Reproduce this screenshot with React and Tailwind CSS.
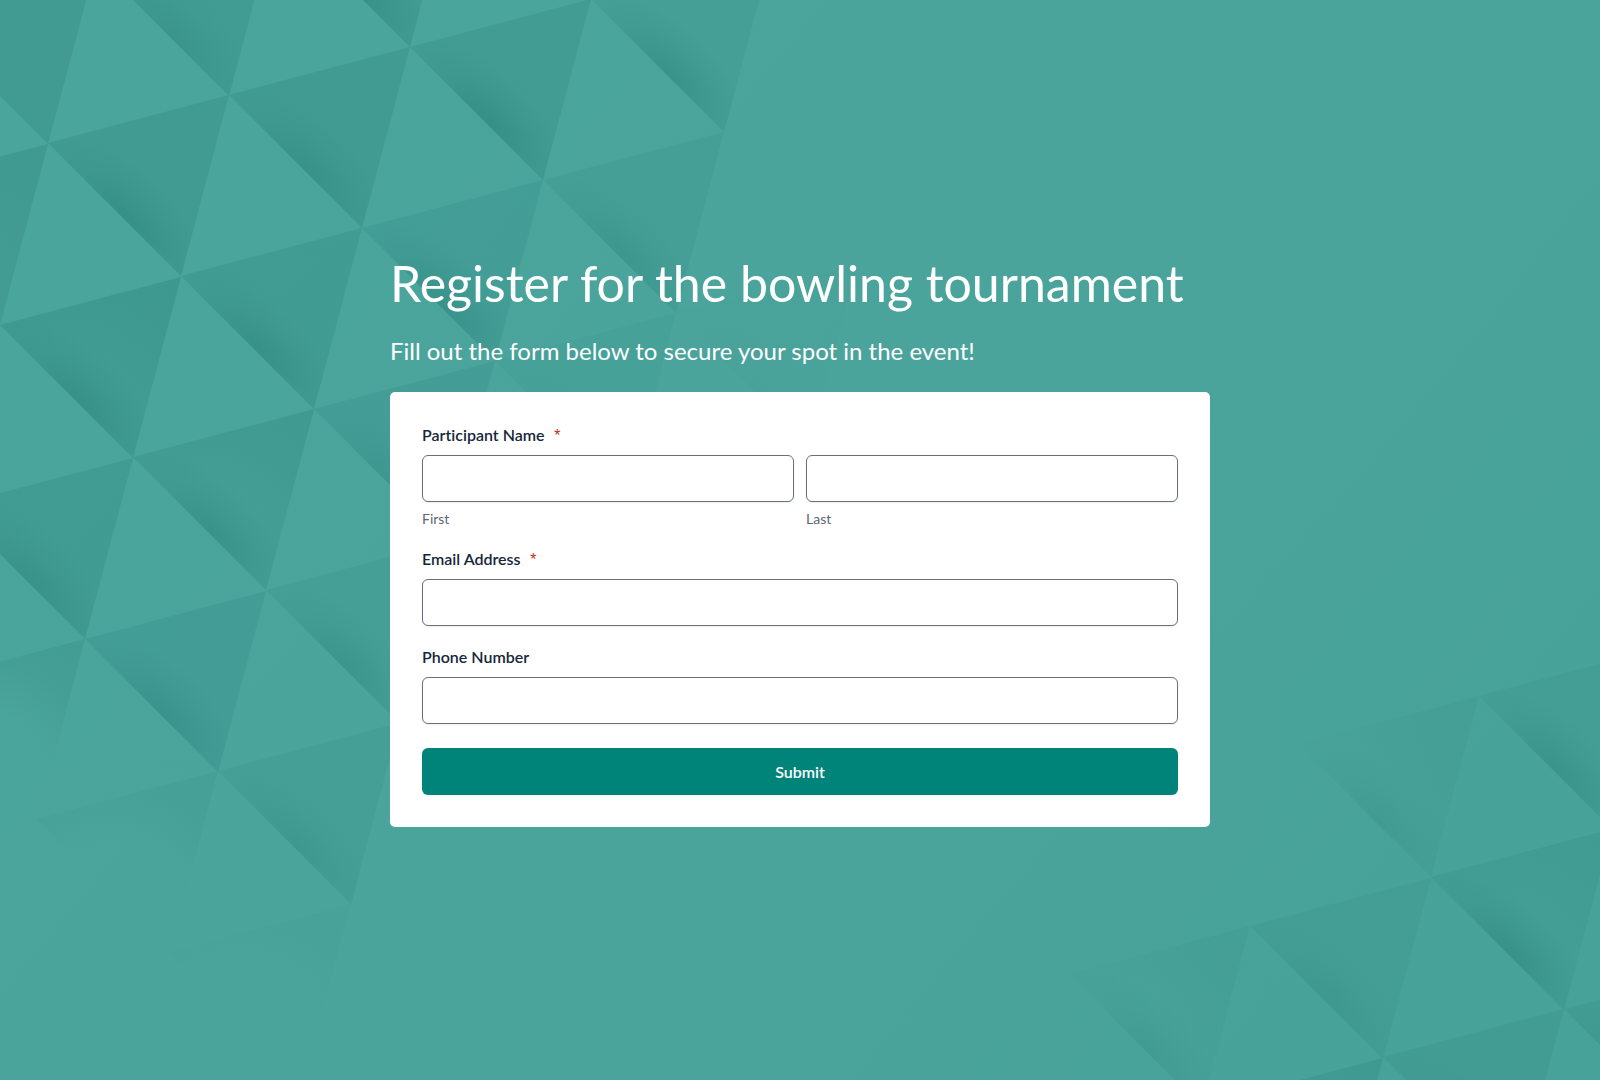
// Every facet is the same triangle, moved around. `base` is the flat shade,
// `fold` the shadow along the long edge, `corner` the shadow at the right tip.
// A `fade` facet loses its flat shade towards the left tip.
const facets = [
  { x: -85, y: 11, base: 0.95, fold: 0, corner: 0 },
  { x: 96, y: -37, base: 0.85, fold: 0.55, corner: 0 },
  { x: 277, y: -86, base: 0.8, fold: 0.9, corner: 0.1 },
  { x: -133, y: 192, base: 0.8, fold: 0, corner: 0.4 },
  { x: 48, y: 143, base: 0.95, fold: 0.9, corner: 0 },
  { x: 229, y: 95, base: 0.9, fold: 0.75, corner: 0 },
  { x: 410, y: 47, base: 0.75, fold: 1, corner: 0 },
  { x: 591, y: -1, base: 0.5, fold: 0.85, corner: 0 },
  { x: 0, y: 325, base: 0.85, fold: 0.85, corner: 0.6 },
  { x: 181, y: 276, base: 0.85, fold: 0.85, corner: 0 },
  { x: 362, y: 228, base: 0.6, fold: 0.85, corner: 0 },
  { x: 543, y: 180, base: 0.45, fold: 0.6, corner: 0 },
  { x: -48, y: 506, base: 0.85, fold: 0.75, corner: 0 },
  { x: 133, y: 457, base: 0.65, fold: 0.8, corner: 0.6 },
  { x: 314, y: 409, base: 0.6, fold: 0.5, corner: 0 },
  { x: 495, y: 361, base: 0.3, fold: 0.1, corner: 0 },
  { x: 676, y: 313, base: 0.1, fold: 0.05, corner: 0 },
  { x: -96, y: 687, base: 0, fold: 0, corner: 1 },
  { x: 85, y: 639, base: 0.6, fold: 0.75, corner: 0.1 },
  { x: 266, y: 590, base: 0.5, fold: 0.65, corner: 0 },
  { x: 37, y: 819, base: 0, fold: 0, corner: 0.6 },
  { x: 218, y: 771, base: 0.45, fold: 0.5, corner: 0 },
  { x: 170, y: 952, base: 0, fold: 0, corner: 0.3 },
  { x: 1479, y: 696, base: 0.5, fold: 0.75, corner: 0 },
  { x: 1298, y: 744, base: 0.35, fold: 0.4, corner: 0.15, fade: true },
  { x: 1431, y: 877, base: 0.55, fold: 0.9, corner: 0.4 },
  { x: 1250, y: 926, base: 0.5, fold: 0.45, corner: 0 },
  { x: 1069, y: 974, base: 0.25, fold: 0.4, corner: 0.3, fade: true },
  { x: 1564, y: 1009, base: 0.75, fold: 0.6, corner: 0 },
  { x: 1383, y: 1057, base: 0.7, fold: 0.5, corner: 0 },
  { x: 1202, y: 1106, base: 0.3, fold: 0, corner: 0.9 },
];

const TRIANGLE = "M0 0 181 -48 133 133Z";

function Backdrop() {
  return (
    <svg
      className="absolute inset-0 h-full w-full"
      viewBox="0 0 1600 1080"
      preserveAspectRatio="xMidYMid slice"
      aria-hidden="true"
    >
      <defs>
        <linearGradient id="wash" gradientUnits="userSpaceOnUse" x1="200" y1="0" x2="1500" y2="1080">
          <stop offset="0" stopColor="#4aa59d" />
          <stop offset="0.5" stopColor="#4aa49c" />
          <stop offset="1" stopColor="#47a29a" />
        </linearGradient>
        <linearGradient id="fade" gradientUnits="userSpaceOnUse" x1="20" y1="0" x2="140" y2="0">
          <stop offset="0" stopColor="#409a92" stopOpacity="0" />
          <stop offset="1" stopColor="#409a92" />
        </linearGradient>
        <radialGradient
          id="fold"
          gradientUnits="userSpaceOnUse"
          cx="0"
          cy="0"
          r="1"
          gradientTransform="translate(77 77) rotate(45) scale(106 50)"
        >
          <stop offset="0" stopColor="#2c857d" stopOpacity="0.56" />
          <stop offset="0.25" stopColor="#2c857d" stopOpacity="0.42" />
          <stop offset="0.6" stopColor="#2c857d" stopOpacity="0.17" />
          <stop offset="1" stopColor="#2c857d" stopOpacity="0" />
        </radialGradient>
        <radialGradient id="corner" gradientUnits="userSpaceOnUse" cx="72" cy="100" r="185">
          <stop offset="0.42" stopColor="#2c857d" stopOpacity="0" />
          <stop offset="0.7" stopColor="#2c857d" stopOpacity="0.2" />
          <stop offset="1" stopColor="#2c857d" stopOpacity="0.26" />
        </radialGradient>
      </defs>
      <rect width="1600" height="1080" fill="url(#wash)" />
      {facets.map((f) => (
        <g key={`${f.x}:${f.y}`} transform={`translate(${f.x} ${f.y})`}>
          <path d={TRIANGLE} fill={f.fade ? "url(#fade)" : "#409a92"} opacity={f.base} />
          <path d={TRIANGLE} fill="url(#fold)" opacity={f.fold} />
          <path d={TRIANGLE} fill="url(#corner)" opacity={f.corner} />
        </g>
      ))}
    </svg>
  );
}

const labelClass = "mb-2.5 block text-base leading-[21px] font-semibold";

const inputClass =
  "block h-[47px] w-full rounded-md border border-[#686e7c] bg-white px-3 text-base text-[#14273a] shadow-sm shadow-black/5 outline-none focus:border-[#00847a]";

function Required() {
  return (
    <span className="ml-2 font-['Liberation_Mono',monospace] text-base leading-none font-normal text-[#c5311d]">
      *
    </span>
  );
}

function Field({ id, label, type, required }) {
  return (
    <div>
      <label htmlFor={id} className={labelClass}>
        {label}
        {required && <Required />}
      </label>
      <input id={id} name={id} type={type} required={required} className={inputClass} />
    </div>
  );
}

function NamePart({ id, label }) {
  return (
    <div className="flex-1">
      <input id={id} name={id} type="text" required className={inputClass} />
      <label htmlFor={id} className="mt-2 block text-sm leading-[18px] text-[#5f6674]">
        {label}
      </label>
    </div>
  );
}

export default function App() {
  return (
    <div className="relative flex min-h-screen items-center justify-center bg-[#4aa49c] font-['Lato','Open_Sans',sans-serif] [font-variant-ligatures:none]">
      <Backdrop />
      <main className="relative w-full max-w-[820px]">
        <h1 className="mb-[22px] text-[50px] leading-[60px] text-white">Register for the bowling tournament</h1>
        <p className="mb-[25px] text-2xl leading-8 text-white">
          Fill out the form below to secure your spot in the event!
        </p>
        <form
          className="flex flex-col gap-5 rounded-[5px] bg-white p-8 text-[#14273a]"
          onSubmit={(e) => e.preventDefault()}
        >
          <fieldset>
            <legend className={labelClass}>
              Participant Name
              <Required />
            </legend>
            <div className="flex gap-3">
              <NamePart id="first" label="First" />
              <NamePart id="last" label="Last" />
            </div>
          </fieldset>
          <Field id="email" label="Email Address" type="email" required />
          <Field id="phone" label="Phone Number" type="tel" />
          <button
            type="submit"
            className="mt-1 h-[47px] w-full cursor-pointer rounded-md bg-[#00847a] text-base font-semibold text-white shadow-sm shadow-black/5 hover:bg-[#00756c]"
          >
            Submit
          </button>
        </form>
      </main>
    </div>
  );
}
